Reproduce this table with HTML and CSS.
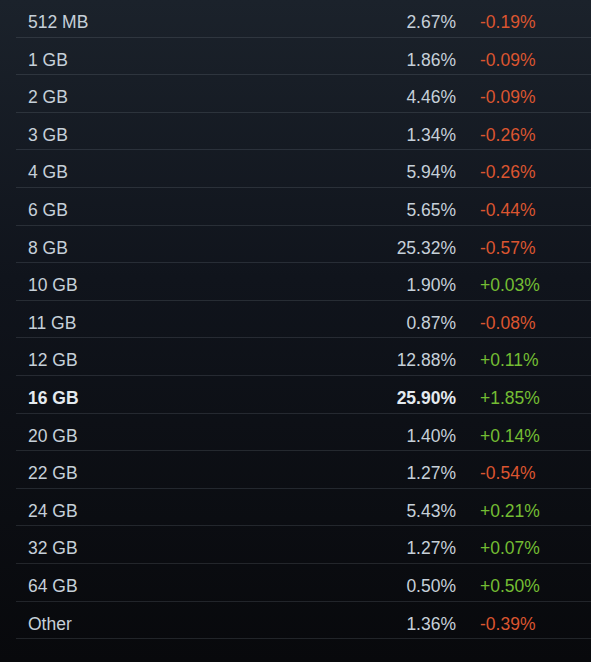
FILE: index.html
```html
<!DOCTYPE html>
<html lang="en">

<head>
    <meta charset="UTF-8">
    <meta name="viewport" content="width=device-width, initial-scale=1.0">
    <title>System RAM</title>
    <link rel="stylesheet" href="styles.css">
</head>

<body>
    <div class="stats">
        <div class="stats-row"><div class="stats-name">512 MB</div><div class="stats-pct">2.67%</div><div class="stats-change down">-0.19%</div></div>
        <div class="stats-row"><div class="stats-name">1 GB</div><div class="stats-pct">1.86%</div><div class="stats-change down">-0.09%</div></div>
        <div class="stats-row"><div class="stats-name">2 GB</div><div class="stats-pct">4.46%</div><div class="stats-change down">-0.09%</div></div>
        <div class="stats-row"><div class="stats-name">3 GB</div><div class="stats-pct">1.34%</div><div class="stats-change down">-0.26%</div></div>
        <div class="stats-row"><div class="stats-name">4 GB</div><div class="stats-pct">5.94%</div><div class="stats-change down">-0.26%</div></div>
        <div class="stats-row"><div class="stats-name">6 GB</div><div class="stats-pct">5.65%</div><div class="stats-change down">-0.44%</div></div>
        <div class="stats-row"><div class="stats-name">8 GB</div><div class="stats-pct">25.32%</div><div class="stats-change down">-0.57%</div></div>
        <div class="stats-row"><div class="stats-name">10 GB</div><div class="stats-pct">1.90%</div><div class="stats-change up">+0.03%</div></div>
        <div class="stats-row"><div class="stats-name">11 GB</div><div class="stats-pct">0.87%</div><div class="stats-change down">-0.08%</div></div>
        <div class="stats-row"><div class="stats-name">12 GB</div><div class="stats-pct">12.88%</div><div class="stats-change up">+0.11%</div></div>
        <div class="stats-row top"><div class="stats-name">16 GB</div><div class="stats-pct">25.90%</div><div class="stats-change up">+1.85%</div></div>
        <div class="stats-row"><div class="stats-name">20 GB</div><div class="stats-pct">1.40%</div><div class="stats-change up">+0.14%</div></div>
        <div class="stats-row"><div class="stats-name">22 GB</div><div class="stats-pct">1.27%</div><div class="stats-change down">-0.54%</div></div>
        <div class="stats-row"><div class="stats-name">24 GB</div><div class="stats-pct">5.43%</div><div class="stats-change up">+0.21%</div></div>
        <div class="stats-row"><div class="stats-name">32 GB</div><div class="stats-pct">1.27%</div><div class="stats-change up">+0.07%</div></div>
        <div class="stats-row"><div class="stats-name">64 GB</div><div class="stats-pct">0.50%</div><div class="stats-change up">+0.50%</div></div>
        <div class="stats-row"><div class="stats-name">Other</div><div class="stats-pct">1.36%</div><div class="stats-change down">-0.39%</div></div>
    </div>
</body>

</html>
```

FILE: styles.css
```css
html {
    background: #08090b;
}

body {
    margin: 0;
    height: 662px;
    background: linear-gradient(to bottom, #1b222b 0%, #10141c 42%, #08090c 100%);
    font-family: "Liberation Sans", Arial, sans-serif;
    font-size: 17.5px;
    color: #c6d0d9;
}

.stats {
    padding-left: 16px;
}

.stats-row {
    display: grid;
    grid-template-columns: 1fr 100px 135px;
    box-sizing: border-box;
    height: 37.6px;
    padding-top: 8px;
    line-height: 28.5px;
    border-bottom: 1px solid rgba(135, 145, 155, 0.2);
}

.stats-name {
    padding-left: 12px;
}

.stats-pct {
    text-align: right;
}

.stats-change {
    padding-left: 24px;
}

.top {
    font-weight: bold;
    color: #e4eaef;
}

.top .stats-change {
    font-weight: normal;
}

.down {
    color: #db5530;
}

.up {
    color: #74bd33;
}
```
